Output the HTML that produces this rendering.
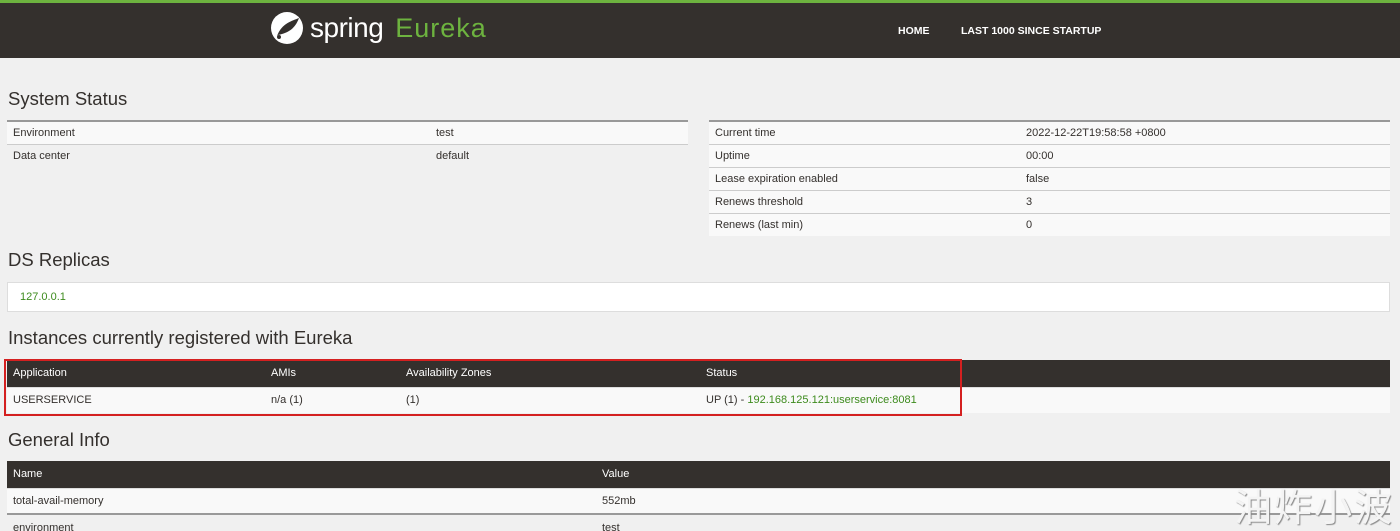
<!DOCTYPE html>
<html style="width:1400px;height:531px;overflow:hidden"><head><meta charset="utf-8"><style>
*{margin:0;padding:0;box-sizing:border-box}
body{width:1400px;height:531px;overflow:hidden;background:#f0f0f0;font-family:"Liberation Sans",sans-serif;color:#34302d;font-size:11px;position:relative}
.hdr{position:absolute;left:0;top:0;width:1400px;height:58px;background:#34302d;border-top:3px solid #6db33f}
.logo{position:absolute;left:270px;top:8px;display:flex;align-items:center}
.logo .w{color:#fff;font-size:28px;margin-left:6px;letter-spacing:-0.5px}
.logo .g{color:#6db33f;font-size:27px;margin-left:12px;letter-spacing:1px}
.nav{position:absolute;top:22px;color:#fff;font-size:10.5px;font-weight:bold}
h2{position:absolute;left:8px;font-size:18.5px;font-weight:normal;color:#34302d}
table{position:absolute;border-collapse:collapse}
td,th{padding:0 6px;text-align:left;font-weight:normal;height:23px}
.kv td{border-top:1px solid #ccc}
.kv tr:first-child td{border-top:2px solid #999}
.kv tr.s td{background:#f9f9f9}
.dk th{background:#34302d;color:#fff;height:27px}
.dk td{height:26px;border-top:1px solid #ddd}
a{color:#3d8b1d;text-decoration:none}
</style></head><body>
<div class="hdr">
<div class="logo">
<svg width="34" height="34" viewBox="0 0 34 34"><circle cx="17" cy="17" r="16" fill="#fff"/><path d="M7 25 C12 12 22 10 29 7 C25 18 18 22 8 24 Z" fill="#34302d"/><circle cx="9" cy="26" r="2" fill="#34302d"/></svg>
<span class="w">spring</span><span class="g">Eureka</span>
</div>
<div class="nav" style="left:898px">HOME</div>
<div class="nav" style="left:961px">LAST 1000 SINCE STARTUP</div>
</div>
<h2 style="top:88px">System Status</h2>
<table class="kv" style="left:7px;top:120px;width:681px">
<tr class="s"><td style="width:423px">Environment</td><td>test</td></tr>
<tr><td>Data center</td><td>default</td></tr>
</table>
<table class="kv" style="left:709px;top:120px;width:681px">
<tr class="s"><td style="width:311px">Current time</td><td>2022-12-22T19:58:58 +0800</td></tr>
<tr class="s"><td>Uptime</td><td>00:00</td></tr>
<tr class="s"><td>Lease expiration enabled</td><td>false</td></tr>
<tr class="s"><td>Renews threshold</td><td>3</td></tr>
<tr class="s"><td>Renews (last min)</td><td>0</td></tr>
</table>
<h2 style="top:249px">DS Replicas</h2>
<div style="position:absolute;left:7px;top:282px;width:1383px;height:30px;background:#fff;border:1px solid #ddd;padding:8px 12px"><a>127.0.0.1</a></div>
<h2 style="top:327px">Instances currently registered with Eureka</h2>
<table class="dk" style="left:7px;top:360px;width:1383px">
<tr><th style="width:258px">Application</th><th style="width:135px">AMIs</th><th style="width:300px">Availability Zones</th><th>Status</th></tr>
<tr style="background:#f9f9f9"><td>USERSERVICE</td><td>n/a (1)</td><td>(1)</td><td>UP (1) - <a>192.168.125.121:userservice:8081</a></td></tr>
</table>
<div style="position:absolute;left:4px;top:359px;width:958px;height:57px;border:2px solid #d42020"></div>
<h2 style="top:429px">General Info</h2>
<table class="dk" style="left:7px;top:461px;width:1383px">
<tr><th style="width:589px">Name</th><th>Value</th></tr>
<tr style="background:#f9f9f9"><td>total-avail-memory</td><td>552mb</td></tr>
<tr><td style="border-top:2px solid #999">environment</td><td style="border-top:2px solid #999">test</td></tr>
</table>
<div style="position:absolute;left:1234px;top:486px;font-family:'Noto Sans CJK SC',sans-serif;font-size:38px;color:#f4f4f4;text-shadow:1px 1px 1px #888;letter-spacing:2px;line-height:1">油炸小波</div>
</body></html>
